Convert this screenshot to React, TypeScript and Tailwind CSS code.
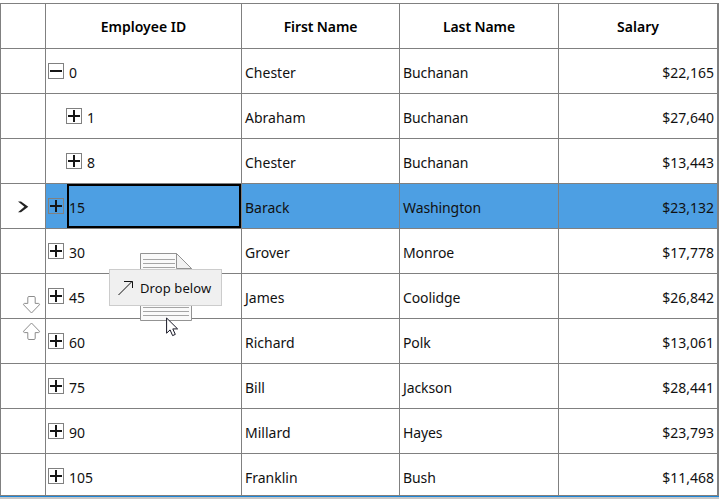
type Employee = {
  id: string;
  first: string;
  last: string;
  salary: string;
  child?: boolean;
  open?: boolean;
  selected?: boolean;
};

const rows: Employee[] = [
  { id: "0", first: "Chester", last: "Buchanan", salary: "$22,165", open: true },
  { id: "1", first: "Abraham", last: "Buchanan", salary: "$27,640", child: true },
  { id: "8", first: "Chester", last: "Buchanan", salary: "$13,443", child: true },
  { id: "15", first: "Barack", last: "Washington", salary: "$23,132", selected: true },
  { id: "30", first: "Grover", last: "Monroe", salary: "$17,778" },
  { id: "45", first: "James", last: "Coolidge", salary: "$26,842" },
  { id: "60", first: "Richard", last: "Polk", salary: "$13,061" },
  { id: "75", first: "Bill", last: "Jackson", salary: "$28,441" },
  { id: "90", first: "Millard", last: "Hayes", salary: "$23,793" },
  { id: "105", first: "Franklin", last: "Bush", salary: "$11,468" },
];

const columns = "grid grid-cols-[46px_196px_158px_159px_158px]";
const cell = "border-r border-b border-[#808080]";

function Expander({ open }: { open?: boolean }) {
  return (
    <svg className="block h-4 w-4 shrink-0" viewBox="0 0 16 16" shapeRendering="crispEdges">
      <rect x="0.5" y="0.5" width="15" height="15" fill="none" stroke="#808080" />
      <rect x="2" y="7" width="12" height="2" fill="#161616" />
      {!open && <rect x="7" y="2" width="2" height="12" fill="#161616" />}
    </svg>
  );
}

function Row({ row }: { row: Employee }) {
  const fill = row.selected ? "bg-[#4d9fe3]" : "bg-white";
  return (
    <div className={`${columns} h-[45px]`}>
      <div className={`${cell} flex items-center justify-center pt-px pl-px`}>
        {row.selected && (
          <svg className="h-3 w-3" viewBox="0 0 12 12">
            <path d="M1 0.6H4L11.3 5.8L4 11.2H1L7.4 5.8Z" fill="#222" />
          </svg>
        )}
      </div>
      <div className={`${cell} ${fill} flex ${row.child ? "pl-5" : "pl-0.5"}`}>
        <div className="pt-3.5">
          <Expander open={row.open} />
        </div>
        <div
          className={`flex-1 ${
            row.selected ? "ml-[3px] border-2 border-black pt-[11px]" : "ml-[5px] pt-[13px]"
          }`}
        >
          {row.id}
        </div>
      </div>
      <div className={`${cell} ${fill} pt-[13px] pl-[3px]`}>{row.first}</div>
      <div className={`${cell} ${fill} pt-[13px] pl-[3px] tracking-[-0.1px]`}>{row.last}</div>
      <div className={`border-b border-[#808080] ${fill} pt-[13px] pr-[3px] text-right`}>{row.salary}</div>
    </div>
  );
}

function DropArrow({ up }: { up?: boolean }) {
  return (
    <svg className={`block h-[19px] w-[19px] ${up ? "" : "rotate-180"}`} viewBox="0 0 19 19">
      <path
        d="M9.5 1L17.4 9.2Q17.6 10.5 16.5 10.6H13.2V16.3Q13.2 17.5 12 17.5H7Q5.8 17.5 5.8 16.3V10.6H2.5Q1.4 10.5 1.6 9.2Z"
        fill="white"
        stroke="#8c8c8c"
        strokeLinejoin="round"
      />
    </svg>
  );
}

function DragPreview() {
  return (
    <div className="absolute top-[252px] left-[109px] h-[86px] w-[113px]">
      <svg className="absolute top-0 left-[31px]" width="53" height="70" viewBox="0 0 53 70">
        <path d="M0.5 1.5H36.5L51.5 16.5V68.5H0.5Z" fill="#fafafa" stroke="#939393" />
        <path d="M36.5 1.5V16.5H51.5Z" fill="#f2f2f2" stroke="#939393" />
        <path
          d="M3 7.5H35M3 11.5H35M3 15.5H35M3 55.5H49M3 59.5H49M3 63.5H49"
          stroke="#a5a5a5"
          shapeRendering="crispEdges"
        />
      </svg>
      <div className="absolute top-[17px] left-0 flex h-[37px] w-[113px] items-center border border-[#cccccc] bg-[#f0f0f0] pl-2">
        <svg className="h-4 w-4 shrink-0" viewBox="0 0 16 16" fill="none" stroke="#111">
          <path d="M0.5 15L14 1.5M6 1.5H14.5V8" />
        </svg>
        <span className="ml-1.5 pt-px text-[13px] tracking-[0.1px] whitespace-nowrap">Drop below</span>
      </div>
      <svg className="absolute top-[65px] left-[57px]" width="13" height="20" viewBox="0 0 13 20">
        <path
          d="M0.6 1V16.2L4.1 12.9L6.6 18.6L9.3 17.4L6.8 11.9H11.6Z"
          fill="white"
          stroke="#171725"
        />
      </svg>
    </div>
  );
}

export default function App() {
  return (
    <div className="relative h-[499px] w-[719px] overflow-hidden bg-white pt-[3px] font-['Noto_Sans','Open_Sans',sans-serif] text-[14px] leading-[22px] text-[#111]">
      <div className="h-[493px] overflow-hidden border-t border-r-2 border-b border-l border-[#808080]">
        <div className="-ml-px w-[717px]">
          <div className={`${columns} h-[45px] text-center font-semibold text-black`}>
            <div className={cell} />
            <div className={`${cell} pt-3`}>Employee ID</div>
            <div className={`${cell} pt-3 tracking-[-0.1px]`}>First Name</div>
            <div className={`${cell} pt-3 tracking-[-0.1px]`}>Last Name</div>
            <div className="border-b border-[#808080] pt-3">Salary</div>
          </div>
          {rows.map((row) => (
            <Row key={row.id} row={row} />
          ))}
        </div>
      </div>
      <div className="h-px bg-[#1c86d8]" />
      <div className="h-0.5 bg-[#c6c6c6]" />
      <div className="absolute top-[295px] left-[22px] flex flex-col gap-2">
        <DropArrow />
        <DropArrow up />
      </div>
      <DragPreview />
    </div>
  );
}
